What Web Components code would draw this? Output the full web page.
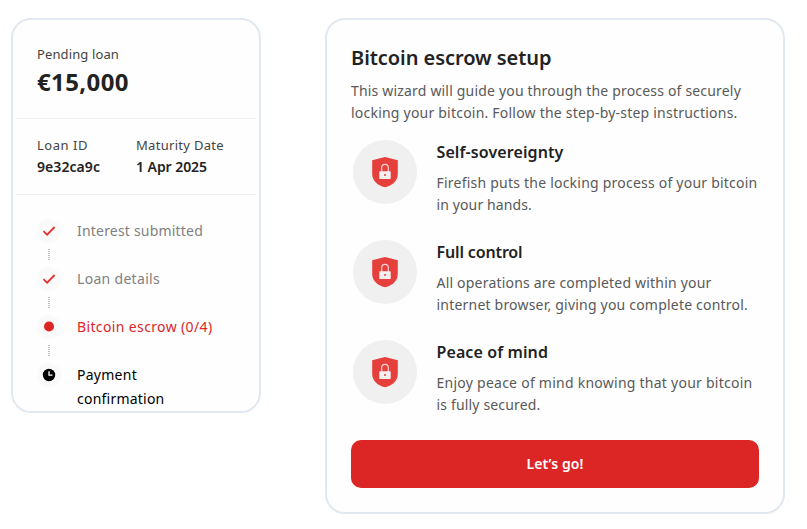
<!DOCTYPE html>
<html lang="en">
<head>
<meta charset="utf-8">
<title>Bitcoin escrow setup</title>
<style>
  body { margin: 0; background: #fff; color: #222; font-family: "Noto Sans", "Open Sans", sans-serif; }
</style>
</head>
<body>
<escrow-page></escrow-page>
<script>
const define = (name, html, setup) => {
  const template = document.createElement('template');
  template.innerHTML = html;
  customElements.define(name, class extends HTMLElement {
    connectedCallback() {
      if (this.shadowRoot) return;
      this.attachShadow({ mode: 'open' }).append(template.content.cloneNode(true));
      if (setup) setup(this, this.shadowRoot);
    }
  });
};

// One line of text, tracked so that it spans the width given in "w".
define('text-line', `<style>
  :host { display: block; white-space: nowrap; }
  span { display: inline-block; }
</style><span><slot></slot></span>`, (host, root) => {
  const span = root.querySelector('span');
  const count = host.textContent.length;
  const extra = (Number(host.getAttribute('w')) - span.getBoundingClientRect().width) / count;
  span.style.letterSpacing = extra.toFixed(3) + 'px';
});

define('panel-card', `<style>
  :host { display: block; box-sizing: border-box; border: 2px solid #e2e8f0; border-radius: 20px; background: #fefefe; }
</style><slot></slot>`);

define('loan-fact', `<style>
  :host { display: block; }
  .label { font-size: 13px; line-height: 20px; color: #444; }
  .value { font-size: 14px; line-height: 20px; margin-top: 2px; font-weight: 600; color: #222; }
</style>
<div class="label"><slot name="label"></slot></div>
<div class="value"><slot></slot></div>`);

define('step-icon', `<style>
  :host { display: block; width: 24px; height: 24px; border-radius: 50%; background: #fafafa; }
  svg { display: none; }
  :host([kind=done]) .done, :host([kind=current]) .current, :host([kind=waiting]) .waiting { display: block; }
</style>
<svg class="done" width="24" height="24" viewBox="0 0 24 24" fill="none" stroke="#e5302f" stroke-width="1.8"><path d="M6.400 12.200 10.100 15.700 17.600 8"/></svg>
<svg class="current" width="24" height="24" viewBox="0 0 24 24"><circle cx="12" cy="11.500" r="5" fill="#dc2626"/></svg>
<svg class="waiting" width="24" height="24" viewBox="0 0 24 24"><circle cx="12" cy="12" r="6.200" fill="#000"/><path d="M12 8.300V12.200H15.500" fill="none" stroke="#fff" stroke-width="1.300"/></svg>`);

define('progress-step', `<style>
  :host { display: grid; grid-template-columns: 24px 1fr; column-gap: 16px; min-height: 48px; font-size: 14px; line-height: 24px; color: #000; }
  :host([kind=done]) { color: #808080; }
  :host([kind=current]) { color: #dc2626; }
  .rail { display: flex; flex-direction: column; align-items: center; }
  .link { margin-top: 6px; width: 2px; height: 12px; background: repeating-linear-gradient(#bbb 0 1px, #fff 1px 2px); }
  :host([last]) .link { display: none; }
</style>
<div class="rail"><step-icon></step-icon><div class="link"></div></div>
<div><slot></slot></div>`, (host, root) => {
  root.querySelector('step-icon').setAttribute('kind', host.getAttribute('kind'));
});

define('loan-summary', `<style>
  :host { display: block; }
  panel-card { height: 395px; }
  .head { padding: 24px 24px 20px; height: 54px; }
  .label { font-size: 13px; line-height: 20px; color: #444; }
  .amount { font-size: 24px; line-height: 32px; margin-top: 2px; font-weight: 700; color: #222; }
  .facts { margin: 0 3px; padding: 16px 21px; height: 43px; border: solid #f0f0f2; border-width: 1px 0; display: grid; grid-template-columns: 99px 1fr; }
  .steps { padding: 24px 24px 0; }
</style>
<panel-card>
  <div class="head">
    <div class="label"><text-line w="82">Pending loan</text-line></div>
    <div class="amount"><text-line w="92">€15,000</text-line></div>
  </div>
  <div class="facts">
    <loan-fact><text-line slot="label" w="51">Loan ID</text-line><text-line w="63">9e32ca9c</text-line></loan-fact>
    <loan-fact><text-line slot="label" w="88">Maturity Date</text-line><text-line w="71">1 Apr 2025</text-line></loan-fact>
  </div>
  <div class="steps">
    <progress-step kind="done"><text-line w="126">Interest submitted</text-line></progress-step>
    <progress-step kind="done"><text-line w="83">Loan details</text-line></progress-step>
    <progress-step kind="current"><text-line w="135.5">Bitcoin escrow (0/4)</text-line></progress-step>
    <progress-step kind="waiting" last><text-line w="60">Payment</text-line><text-line w="87.5">confirmation</text-line></progress-step>
  </div>
</panel-card>`);

define('shield-badge', `<style>
  :host { display: block; width: 64px; height: 64px; border-radius: 50%; background: #f0f0f0; }
  svg { display: block; }
</style>
<svg width="64" height="64" viewBox="0 0 64 64">
  <path d="M32 17 44.800 20.200V34c0 6.400-4.800 11.300-12.800 13.300C24 45.300 19.200 40.400 19.200 34V20.200Z" fill="#e6403d"/>
  <path d="M28.700 32V27.600a3.300 3.300 0 0 1 6.600 0V32" fill="none" stroke="#f7d5d4" stroke-width="1.200"/>
  <rect x="26.300" y="31.300" width="11.400" height="7.800" rx=".6" fill="#f8f0f0"/>
  <circle cx="32" cy="35" r="1" fill="#e6403d"/>
</svg>`);

define('benefit-item', `<style>
  :host { display: grid; grid-template-columns: 64px 1fr; column-gap: 19.500px; padding-left: 2px; height: 76px; }
  .title { margin-top: 1px; font-size: 16px; line-height: 22px; font-weight: 600; color: #222; }
  .copy { margin-top: 9px; font-size: 14px; line-height: 22px; color: #595959; }
</style>
<shield-badge></shield-badge>
<div><div class="title"><slot name="title"></slot></div><div class="copy"><slot></slot></div></div>`);

define('action-button', `<style>
  :host { display: block; }
  button { display: flex; align-items: center; justify-content: center; width: 100%; height: 48px; border: 0; border-radius: 10px; padding: 0; background: #dc2626; color: #fff; font: 600 14px/20px "Noto Sans", sans-serif; }
</style><button type="button"><slot></slot></button>`);

define('escrow-wizard', `<style>
  :host { display: block; }
  panel-card { height: 496px; padding: 24px; }
  h1 { margin: 0; font-size: 20px; line-height: 28px; font-weight: 600; color: #222; }
  .intro { margin-top: 8px; font-size: 14px; line-height: 22px; color: #595959; }
  .benefits { display: flex; flex-direction: column; gap: 24px; margin: 16px 0 24px; }
</style>
<panel-card>
  <h1><text-line w="200.5">Bitcoin escrow setup</text-line></h1>
  <div class="intro">
    <text-line w="390">This wizard will guide you through the process of securely</text-line>
    <text-line w="386.5">locking your bitcoin. Follow the step-by-step instructions.</text-line>
  </div>
  <div class="benefits">
    <benefit-item><text-line slot="title" w="127">Self-sovereignty</text-line>
      <text-line w="321">Firefish puts the locking process of your bitcoin</text-line><text-line w="95.5">in your hands.</text-line></benefit-item>
    <benefit-item><text-line slot="title" w="86">Full control</text-line>
      <text-line w="275">All operations are completed within your</text-line><text-line w="311.5">internet browser, giving you complete control.</text-line></benefit-item>
    <benefit-item><text-line slot="title" w="111.5">Peace of mind</text-line>
      <text-line w="316">Enjoy peace of mind knowing that your bitcoin</text-line><text-line w="104">is fully secured.</text-line></benefit-item>
  </div>
  <action-button><text-line w="57">Let’s go!</text-line></action-button>
</panel-card>`);

define('escrow-page', `<style>
  :host { display: grid; grid-template-columns: 250px 460px; column-gap: 64px; align-items: start; padding: 18px 0 0 11px; height: 511px; overflow: hidden; }
</style>
<loan-summary></loan-summary>
<escrow-wizard></escrow-wizard>`);
</script>
</body>
</html>
